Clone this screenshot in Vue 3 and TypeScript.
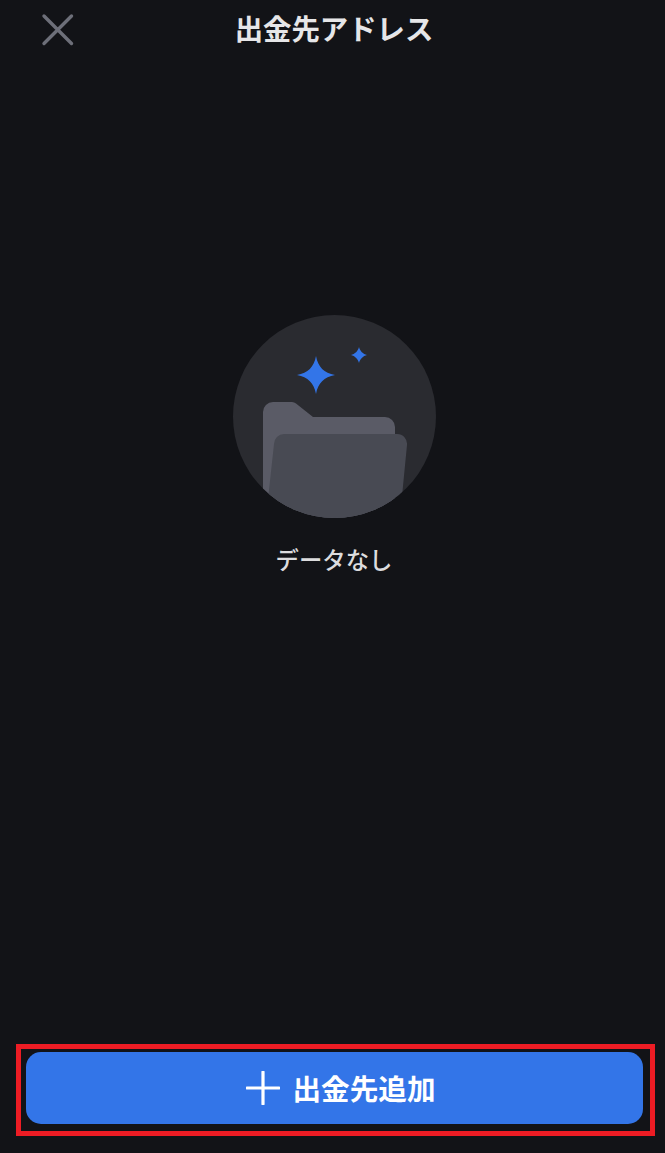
<script setup lang="ts">
const title = '出金先アドレス'
const emptyText = 'データなし'
const addLabel = '出金先追加'
</script>

<template>
  <div class="page">
    <header class="topbar">
      <button class="close" aria-label="close">
        <svg width="34" height="34" viewBox="0 0 34 34" fill="none">
          <path d="M3 3L30.5 30.5M30.5 3L3 30.5" stroke="#6d6f79" stroke-width="3.4" stroke-linecap="round" />
        </svg>
      </button>
      <h1 class="title">{{ title }}</h1>
    </header>

    <main class="empty">
      <div class="badge">
        <svg width="203" height="203" viewBox="0 0 203 203">
          <defs>
            <clipPath id="disc"><circle cx="101.5" cy="101.5" r="101.5" /></clipPath>
          </defs>
          <circle cx="101.5" cy="101.5" r="101.5" fill="#2a2b30" />
          <path d="M83 41C85 52 91 58 102 60C91 62 85 68 83 79C81 68 75 62 64 60C75 58 81 52 83 41Z" fill="#3375e8" />
          <path d="M126 32C127 36 130 39 134 40C130 41 127 44 126 48C125 44 122 41 118 40C122 39 125 36 126 32Z" fill="#3375e8" />
          <g clip-path="url(#disc)">
            <path d="M30 97a10 10 0 0 1 10-10h19a6 6 0 0 1 4 1.6L80 102h72a10 10 0 0 1 10 10v100H30Z" fill="#5a5b66" />
            <path d="M41 129a10 10 0 0 1 10-10h113a10 10 0 0 1 10 11L166 212H32Z" fill="#484a53" />
          </g>
        </svg>
      </div>
      <p class="empty-text">{{ emptyText }}</p>
    </main>

    <footer class="footer">
      <div class="highlight">
        <button class="add">
          <svg width="34" height="34" viewBox="0 0 34 34" fill="none">
            <path d="M17 1V33M1 17H33" stroke="#fff" stroke-width="3.2" stroke-linecap="round" />
          </svg>
          <span class="add-label">{{ addLabel }}</span>
        </button>
      </div>
    </footer>
  </div>
</template>

<style>
html, body {
  margin: 0;
  background: #121317;
}
</style>

<style scoped>
.page {
  height: 1153px;
  display: flex;
  flex-direction: column;
  background: #121317;
  font-family: "Liberation Sans", "Noto Sans CJK JP", sans-serif;
  overflow: hidden;
}
.topbar {
  height: 58px;
  flex: none;
  display: flex;
  align-items: center;
  justify-content: center;
  position: relative;
}
.close {
  position: absolute;
  left: 41px;
  top: 13px;
  padding: 0;
  border: 0;
  background: none;
  line-height: 0;
}
.title {
  margin: 2px 0 0 3px;
  font-size: 28.4px;
  font-weight: 700;
  line-height: 40px;
  color: #e6e6e8;
}
.empty {
  flex: 1;
  display: flex;
  flex-direction: column;
  align-items: center;
  padding: 257px 0 0 3px;
}
.badge {
  width: 203px;
  height: 203px;
  line-height: 0;
}
.empty-text {
  margin: 26px 0 0;
  font-size: 23.4px;
  font-weight: 500;
  line-height: 34px;
  color: #dcdcde;
}
.footer {
  flex: none;
  padding: 0 10px 17px 16px;
}
.highlight {
  border: 5px solid #ed1c24;
  padding: 3px 7px 7px 5px;
}
.add {
  width: 100%;
  height: 72px;
  display: flex;
  align-items: center;
  justify-content: center;
  gap: 13px;
  border: 0;
  border-radius: 15px;
  background: #3375e8;
  color: #fff;
  font-family: inherit;
  font-size: 28.6px;
  font-weight: 700;
  padding: 0 0 0 12px;
}
.add-label {
  position: relative;
  top: -1px;
}
</style>
